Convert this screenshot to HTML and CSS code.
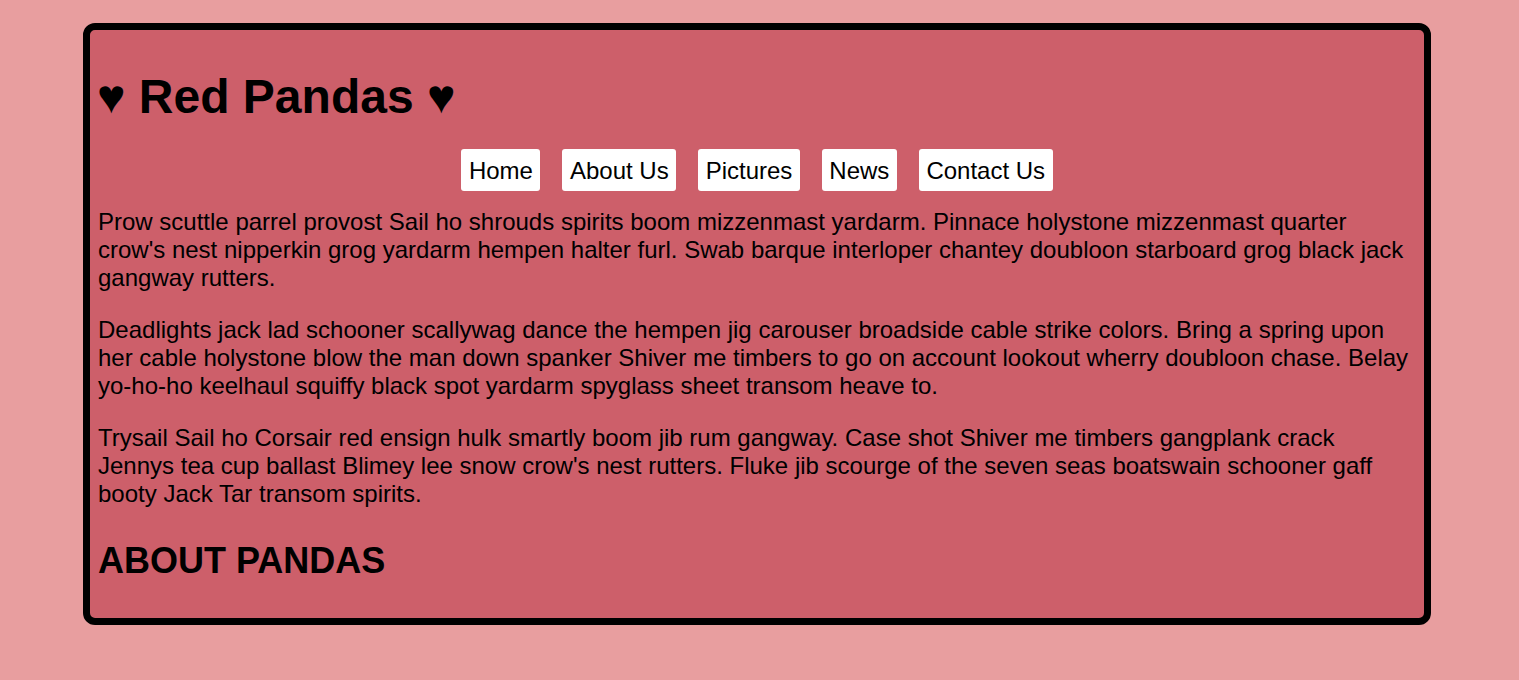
FILE: index.html
```html
<!DOCTYPE html>
<html lang="en">
<head>
<meta charset="utf-8">
<title>Red Pandas</title>
<link rel="stylesheet" href="styles.css">
</head>
<body>
<div class="page">
  <h1 class="title">♥ Red Pandas ♥</h1>
  <nav class="nav">
    <a class="nav-link" href="#">Home</a>
    <a class="nav-link" href="#">About Us</a>
    <a class="nav-link" href="#">Pictures</a>
    <a class="nav-link" href="#">News</a>
    <a class="nav-link" href="#">Contact Us</a>
  </nav>
  <p class="text">Prow scuttle parrel provost Sail ho shrouds spirits boom mizzenmast yardarm. Pinnace holystone mizzenmast quarter crow's nest nipperkin grog yardarm hempen halter furl. Swab barque interloper chantey doubloon starboard grog black jack gangway rutters.</p>
  <p class="text">Deadlights jack lad schooner scallywag dance the hempen jig carouser broadside cable strike colors. Bring a spring upon her cable holystone blow the man down spanker Shiver me timbers to go on account lookout wherry doubloon chase. Belay yo-ho-ho keelhaul squiffy black spot yardarm spyglass sheet transom heave to.</p>
  <p class="text">Trysail Sail ho Corsair red ensign hulk smartly boom jib rum gangway. Case shot Shiver me timbers gangplank crack Jennys tea cup ballast Blimey lee snow crow's nest rutters. Fluke jib scourge of the seven seas boatswain schooner gaff booty Jack Tar transom spirits.</p>
  <h2 class="section-title">ABOUT PANDAS</h2>
</div>
</body>
</html>
```

FILE: styles.css
```css
html {
  background: #e89e9f;
}

body {
  margin: 0;
  padding: 23px 0 0 83px;
  font-family: Arial, "Liberation Sans", sans-serif;
  font-size: 24px;
  color: #000;
}

.page {
  box-sizing: border-box;
  width: 1348px;
  border: 7px solid #000;
  border-radius: 12px;
  background: #cd5f6a;
  padding: 7px 8px 8px 8px;
}

.title {
  font-size: 48px;
  font-weight: bold;
  margin: 32px 0 25px -1px;
}

.nav {
  display: flex;
  justify-content: center;
  gap: 22px;
}

.nav-link {
  background: #fff;
  color: #000;
  text-decoration: none;
  padding: 8px 7.5px 6px 7.5px;
  border-radius: 3px;
}

.text {
  margin: 17px 0 24px 0;
}

.text + .text {
  margin-top: 24px;
}

.section-title {
  font-size: 36px;
  font-weight: bold;
  margin: 32px 0 28px 0;
}
```
